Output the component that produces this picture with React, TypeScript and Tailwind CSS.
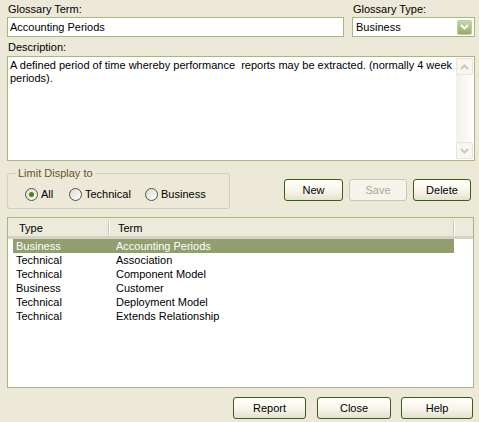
import React from "react";

const rows: [string, string][] = [
  ["Business", "Accounting Periods"],
  ["Technical", "Association"],
  ["Technical", "Component Model"],
  ["Business", "Customer"],
  ["Technical", "Deployment Model"],
  ["Technical", "Extends Relationship"],
];

function Chevron({ up, color }: { up?: boolean; color: string }) {
  return (
    <svg width="9" height="6" viewBox="0 0 9 6">
      <path
        d={up ? "M1 5 L4.5 1.5 L8 5" : "M1 1 L4.5 4.5 L8 1"}
        fill="none"
        stroke={color}
        strokeWidth="2"
      />
    </svg>
  );
}

function Radio({ checked, label }: { checked?: boolean; label: string }) {
  return (
    <div className="flex items-center">
      <div className="w-[13px] h-[13px] rounded-full border border-[#4A5640] bg-gradient-to-br from-[#DCDAD0] to-white flex items-center justify-center">
        {checked && <div className="w-[5px] h-[5px] rounded-full bg-[#4F7F1E]" />}
      </div>
      <span className="ml-[3px]">{label}</span>
    </div>
  );
}

function Btn({ label, w, disabled }: { label: string; w: string; disabled?: boolean }) {
  return (
    <div
      className={
        "h-[22px] rounded-[3px] border flex items-center justify-center " +
        w +
        (disabled
          ? " border-[#CAC8BB] bg-[#F5F4EA] text-[#ACA899]"
          : " border-[#3B5E14] bg-gradient-to-b from-[#FFFFFA] via-[#F8F6EC] to-[#E6E2CF] text-black")
      }
    >
      {label}
    </div>
  );
}

export default function App() {
  return (
    <div className="w-[479px] h-[422px] bg-[#ECE9D8] pt-[3px] pl-[7px] flex flex-col text-[11px] leading-[13px] text-black font-['Liberation_Sans',Arial,sans-serif] overflow-hidden">
      {/* row 1 */}
      <div className="flex">
        <div className="w-[337px] flex flex-col">
          <div className="h-[13px] pl-[1px]">Glossary Term:</div>
          <div className="mt-[1px] h-[20px] border border-[#A5B97F] bg-white pl-[2px] flex items-center">
            Accounting Periods
          </div>
        </div>
        <div className="ml-[8px] w-[123px] flex flex-col">
          <div className="h-[13px] pl-[1px]">Glossary Type:</div>
          <div className="mt-[1px] h-[20px] border border-[#A5B97F] bg-white pl-[3px] flex items-center justify-between">
            <span>Business</span>
            <div className="mr-[2px] w-[15px] h-[15px] rounded-[2px] border border-[#BDCDA0] bg-gradient-to-b from-[#C8D8A8] to-[#93AC65] flex items-center justify-center">
              <Chevron color="#FFFFFF" />
            </div>
          </div>
        </div>
      </div>

      {/* description */}
      <div className="mt-[4px] h-[13px] pl-[1px]">Description:</div>
      <div className="mt-[2px] w-[468px] h-[105px] border border-[#A5B97F] bg-white flex">
        <div className="flex-1 pl-[2px] pt-[2px]">
          A defined period of time whereby performance&nbsp; reports may be extracted. (normally 4 week periods).
        </div>
        <div className="w-[17px] my-[1px] mr-[1px] flex flex-col bg-gradient-to-r from-[#F3F1E8] to-[#FEFEFB]">
          <div className="h-[17px] rounded-[2px] border border-[#E8E6DA] bg-[#F7F6EF] flex items-center justify-center">
            <Chevron up color="#CBC9BC" />
          </div>
          <div className="flex-1" />
          <div className="h-[17px] rounded-[2px] border border-[#E8E6DA] bg-[#F7F6EF] flex items-center justify-center">
            <Chevron color="#CBC9BC" />
          </div>
        </div>
      </div>

      {/* group + buttons */}
      <div className="mt-[6px] flex items-start">
        <fieldset className="w-[223px] h-[42px] border border-[#D0D0BF] rounded-[3px] pl-[17px]">
          <legend className="ml-[-9px] px-[2px] text-[#5F5628]">Limit Display to</legend>
          <div className="mt-[8px] flex">
            <div className="w-[44px]">
              <Radio checked label="All" />
            </div>
            <div className="w-[76px]">
              <Radio label="Technical" />
            </div>
            <Radio label="Business" />
          </div>
        </fieldset>
        <div className="ml-[54px] mt-[12px] flex gap-[6px]">
          <Btn label="New" w="w-[59px]" />
          <Btn label="Save" w="w-[58px]" disabled />
          <Btn label="Delete" w="w-[58px]" />
        </div>
      </div>

      {/* list */}
      <div className="mt-[8px] w-[467px] h-[171px] border border-[#A5B97F] bg-white flex flex-col">
        <div className="h-[21px] bg-[#EBEADB] border-b-[3px] border-[#D6D3C4] flex items-center">
          <div className="w-[100px] pl-[11px] pt-[2px]">Type</div>
          <div className="w-[2px] h-[14px] mt-[2px] border-l border-[#C7C5B2] bg-white" />
          <div className="w-[343px] pl-[8px] pt-[2px]">Term</div>
          <div className="w-[2px] h-[14px] mt-[2px] border-l border-[#C7C5B2] bg-white" />
        </div>
        <div className="flex flex-col ml-[5px] w-[441px]">
          {rows.map(([t, n], i) => (
            <div
              key={n}
              className={"h-[14px] flex items-center " + (i === 0 ? "bg-[#939E6F] text-white" : "")}
            >
              <div className="w-[100px] pl-[3px]">{t}</div>
              <div className="pl-[3px]">{n}</div>
            </div>
          ))}
        </div>
      </div>

      {/* bottom buttons */}
      <div className="mt-[9px] ml-[226px] flex">
        <Btn label="Report" w="w-[73px]" />
        <div className="ml-[11px]">
          <Btn label="Close" w="w-[74px]" />
        </div>
        <div className="ml-[10px]">
          <Btn label="Help" w="w-[72px]" />
        </div>
      </div>
    </div>
  );
}
